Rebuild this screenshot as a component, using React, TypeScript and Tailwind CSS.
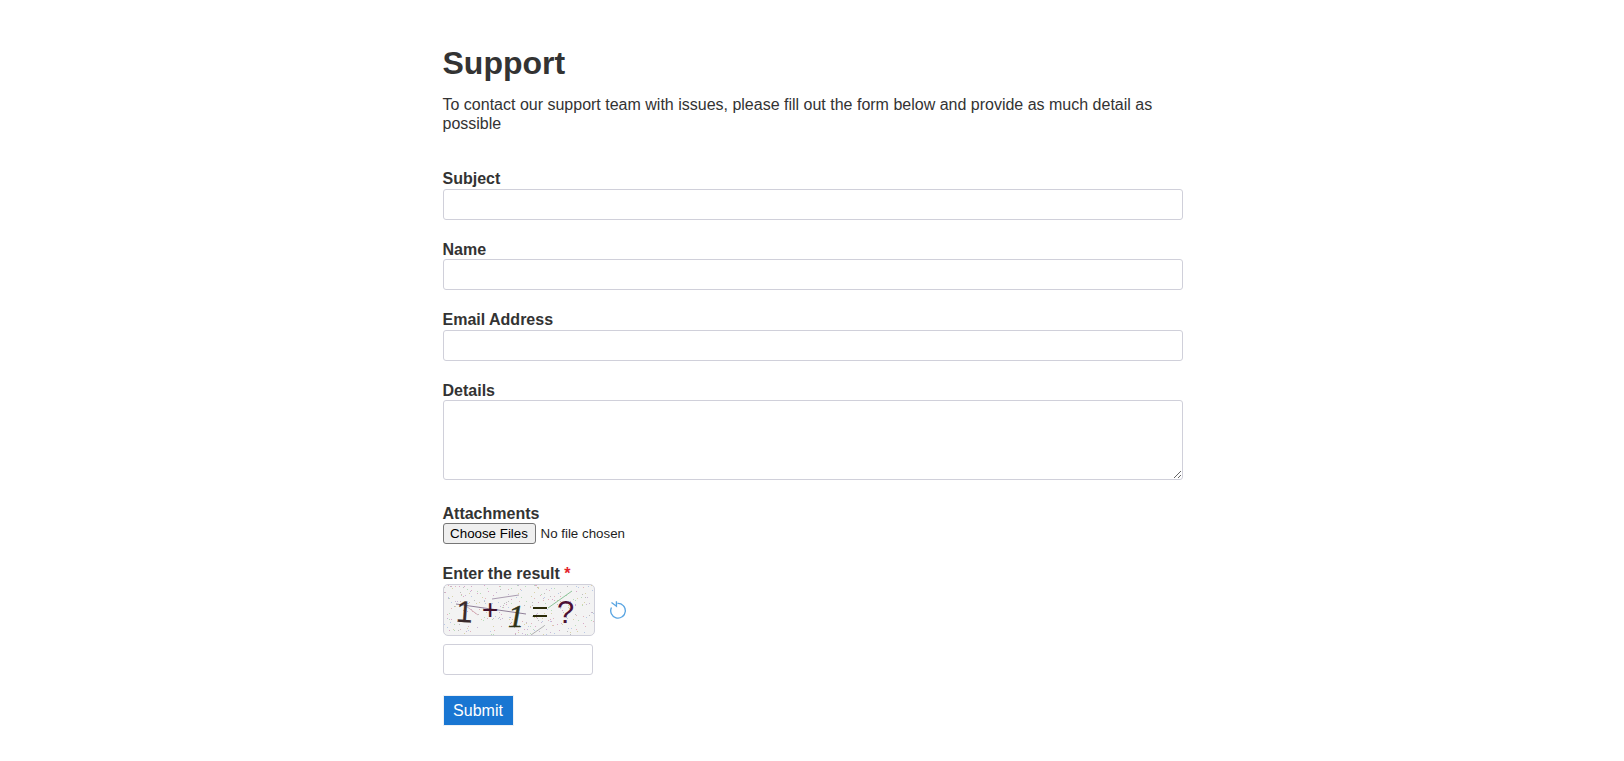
const fieldClass = "block w-full rounded-[3px] border border-[#d0d0da] bg-white";

const Label = ({ children }: { children: React.ReactNode }) => (
  <label className="block text-base leading-[19.6px] font-bold text-[#333333]">{children}</label>
);

// speckle noise behind the captcha
const noiseColors = ["#c9b6d6", "#b9c9e6", "#e0b4bc", "#b7dcb9", "#d8d2a8", "#bdbdbd", "#d9a8c8"];
const noise = Array.from({ length: 320 }, (_, i) => ({
  x: (i * 97 + (i * i * 13) % 61) % 150,
  y: (i * 41 + (i * i * 7) % 37) % 50,
  fill: noiseColors[i % noiseColors.length],
}));

const Captcha = () => (
  <div className="h-[52px] w-[152px] overflow-hidden rounded-[5px] border border-[#d0d0da] bg-[#f3f3f3]">
    <svg width="150" height="50" viewBox="0 0 150 50">
      {noise.map((d, i) => (
        <rect key={i} x={d.x} y={d.y} width="1" height="1" fill={d.fill} />
      ))}
      <path d="M48 14 L75 10" stroke="#a99bb0" strokeWidth="1" />
      <path d="M12 19 L82 29" stroke="#8f7f98" strokeWidth="1" />
      <path d="M104 23 L128 6" stroke="#8ec49a" strokeWidth="1" />
      <path d="M87 50 L100 41" stroke="#b0b0b0" strokeWidth="1" />
      <path d="M22 21 L34 30" stroke="#d5b0b8" strokeWidth="1" />
      <text x="12" y="37" fontFamily="Liberation Sans" fontSize="30" fill="#3a2a2a" stroke="#3a2a2a" strokeWidth="0.2" transform="rotate(4 20 30)">1</text>
      <text x="38" y="34" fontFamily="Liberation Sans" fontSize="28" fill="#40102a" stroke="#40102a" strokeWidth="0.2">+</text>
      <text x="64" y="42" fontFamily="Liberation Serif" fontStyle="italic" fontSize="32" fill="#2e3318" stroke="#2e3318" strokeWidth="0.5">1</text>
      <path d="M89 23 H103 M89 31 H103" stroke="#2b2b08" strokeWidth="2" />
      <text x="113" y="38" fontFamily="Liberation Sans" fontSize="31" fill="#4c1034">?</text>
    </svg>
  </div>
);

const RefreshIcon = () => (
  <svg width="18" height="18" viewBox="0 0 16 16" fill="none" stroke="#5aa5e2" strokeWidth="1.2" className="-ml-[1px]">
    <path d="M2.2 5.8 A6.5 6.5 0 1 0 7.5 2.2" />
    <path d="M6.6 0.2 V4.6 L2.2 1.4" />
  </svg>
);

export default function App() {
  return (
    <div className="min-h-screen bg-white font-['Liberation_Sans',Arial,sans-serif] text-[#333333]">
      <div className="mx-auto w-[742px] pt-[44px] pl-[1.5px]">
        <h1 className="text-[32px] leading-[38px] font-bold">Support</h1>
        <p className="mt-[13px] text-base leading-[19px]">
          To contact our support team with issues, please fill out the form below and provide as much detail as possible
        </p>
        <form className="mt-[36.4px] w-[740px]">
          <Label>Subject</Label>
          <input className={`${fieldClass} h-[31px]`} />
          <div className="mt-[19.8px]">
            <Label>Name</Label>
            <input className={`${fieldClass} h-[31px]`} />
          </div>
          <div className="mt-[19.8px]">
            <Label>Email Address</Label>
            <input className={`${fieldClass} h-[31px]`} />
          </div>
          <div className="mt-[19.8px]">
            <Label>Details</Label>
            <textarea className={`${fieldClass} h-[80px]`} />
          </div>
          <div className="mt-[23.6px]">
            <Label>Attachments</Label>
            <input
              type="file"
              multiple
              className="block h-[21px] text-[13.333px] text-[#1f1f1f] file:mr-[5px] file:h-[21px] file:w-[93px] file:rounded-[3px] file:border file:border-solid file:border-[#767676] file:bg-[#efefef] file:text-black"
            />
          </div>
          <div className="mt-[19.4px]">
            <Label>
              Enter the result <span className="text-[#e3222a]">*</span>
            </Label>
            <div className="mt-[0.6px] flex items-center gap-[15px]">
              <Captcha />
              <RefreshIcon />
            </div>
            <input className={`${fieldClass} mt-2 h-[31px] !w-[150px]`} />
          </div>
          <button type="button" className="mt-[20px] block h-[31px] w-[71px] border border-[#eef1f5] bg-[#1976d2] pt-[2px] text-base text-white">
            Submit
          </button>
        </form>
      </div>
    </div>
  );
}
